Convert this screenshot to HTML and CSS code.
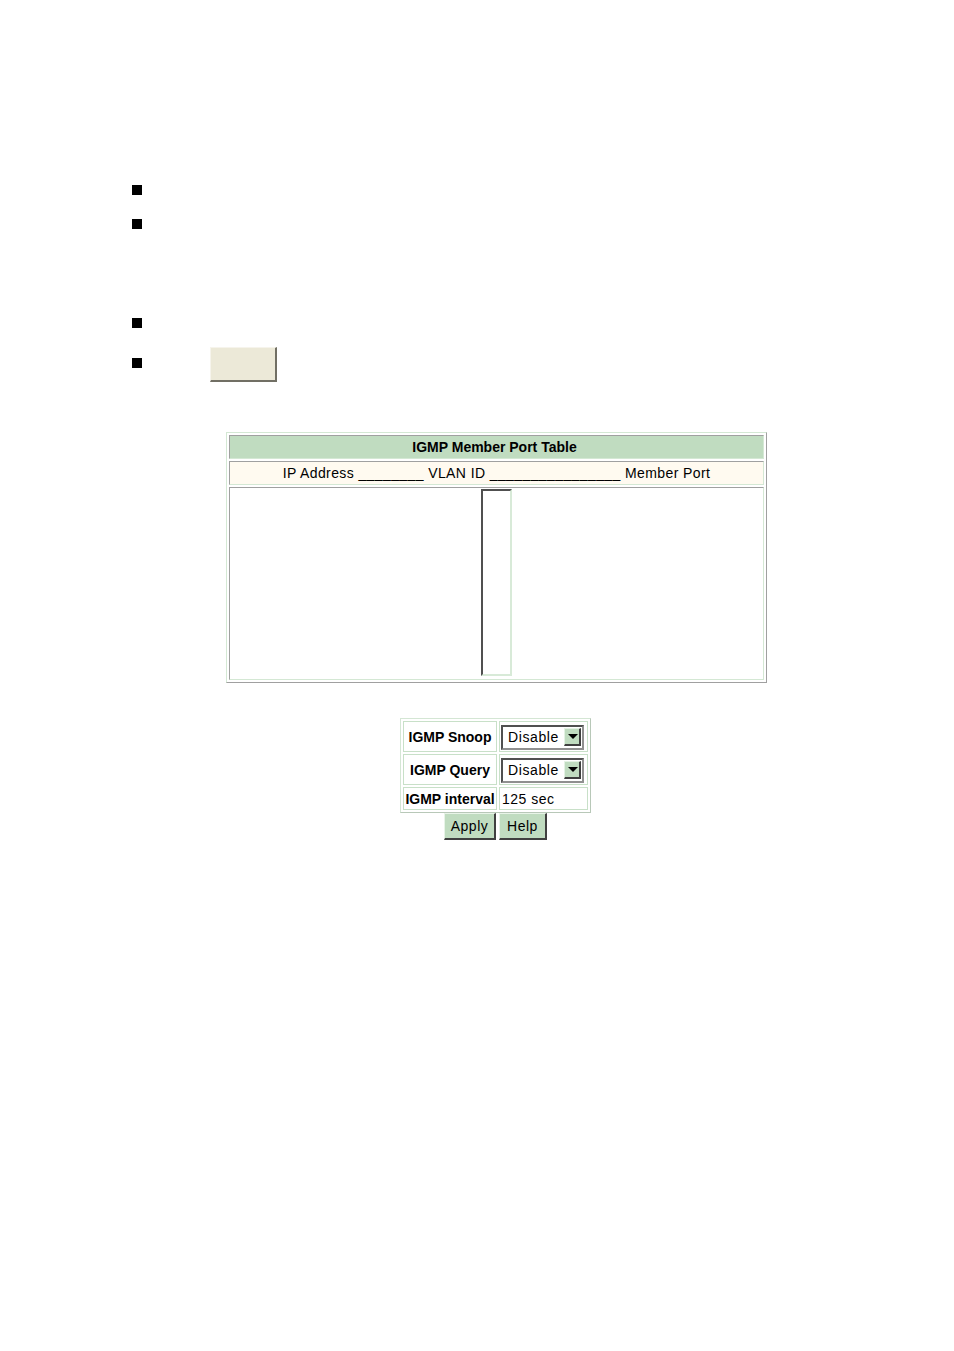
FILE: index.html
```html
<!DOCTYPE html>
<html>
<head>
<meta charset="utf-8">
<link rel="stylesheet" href="styles.css">
</head>
<body>
<div class="page">
  <ul class="bullets">
    <li class="b1"><span class="sq"></span></li>
    <li class="b2"><span class="sq"></span></li>
    <li class="b3"><span class="sq"></span></li>
    <li class="b4"><span class="sq"></span><button class="grey-btn" type="button"></button></li>
  </ul>

  <table class="member">
    <tr><td class="head">IGMP Member Port Table</td></tr>
    <tr><td class="cols">IP Address ________ VLAN ID ________________ Member Port</td></tr>
    <tr><td class="body"><div class="listbox"></div></td></tr>
  </table>

  <div class="form">
    <table class="igmp">
      <tr>
        <td class="label">IGMP Snoop</td>
        <td class="value"><div class="select"><span class="opt">Disable</span><span class="arrow"></span></div></td>
      </tr>
      <tr>
        <td class="label">IGMP Query</td>
        <td class="value"><div class="select"><span class="opt">Disable</span><span class="arrow"></span></div></td>
      </tr>
      <tr class="short">
        <td class="label">IGMP interval</td>
        <td class="value text">125 sec</td>
      </tr>
    </table>
    <div class="actions">
      <button class="btn apply" type="button">Apply</button>
      <button class="btn help" type="button">Help</button>
    </div>
  </div>
</div>
</body>
</html>
```
FILE: styles.css
```css
html, body {
  margin: 0;
  padding: 0;
  background: #ffffff;
}
body {
  font-family: "Liberation Sans", Arial, sans-serif;
  font-size: 14px;
  color: #000;
}
.page {
  width: 954px;
  min-height: 1351px;
  padding-top: 185px;
  box-sizing: border-box;
}
.bullets {
  list-style: none;
  margin: 0 0 0 132px;
  padding: 0;
}
.bullets li {
  display: flex;
  align-items: flex-start;
}
.sq {
  display: block;
  width: 10px;
  height: 10px;
  background: #000;
}
.b1 { margin-bottom: 24px; }
.b2 { margin-bottom: 89px; }
.b3 { margin-bottom: 19px; }
.b4 .sq { margin-top: 11px; }
.grey-btn {
  margin: 0 0 0 68px;
  padding: 0;
  width: 67px;
  height: 35px;
  box-sizing: border-box;
  background: #ece9d8;
  border-style: solid;
  border-width: 1px 2px 2px 1px;
  border-color: #f6f4ec #716f64 #716f64 #f6f4ec;
}

/* member table */
.member {
  margin: 50px 0 0 226px;
  width: 541px;
  box-sizing: border-box;
  border-collapse: separate;
  border-spacing: 2px;
  border-style: solid;
  border-width: 1px;
  border-color: #d4e8d4 #a0a0a0 #a0a0a0 #d4e8d4;
}
.member td {
  padding: 0;
  border-style: solid;
  border-width: 1px;
  border-color: #a0a0a0 #d4e8d4 #d4e8d4 #a0a0a0;
  text-align: center;
  box-sizing: border-box;
}
.member .head {
  height: 24px;
  background: #c0dcc0;
  font-weight: bold;
  padding-right: 4px;
}
.member .cols {
  height: 24px;
  background: #fffaf0;
  letter-spacing: 0.4px;
}
.member .body {
  height: 193px;
  background: #fff;
  vertical-align: top;
}
.listbox {
  width: 31px;
  height: 187px;
  margin: 1px auto 0;
  box-sizing: border-box;
  background: #fff;
  border-style: solid;
  border-width: 2px;
  border-color: #505050 #d8ead8 #d8ead8 #505050;
}

/* igmp form */
.form {
  margin: 35px 0 0 400px;
  width: 191px;
}
.igmp {
  width: 191px;
  box-sizing: border-box;
  border-collapse: separate;
  border-spacing: 2px;
  border-style: solid;
  border-width: 1px;
  border-color: #d4e6d4 #b8c8b8 #b8c8b8 #d4e6d4;
}
.igmp td {
  padding: 0;
  height: 31px;
  box-sizing: border-box;
  border: 1px solid #c8e0c8;
}
.igmp .short td {
  height: 23px;
}
.igmp .label {
  width: 94px;
  font-weight: bold;
  text-align: center;
  white-space: nowrap;
}
.igmp .value {
  width: 89px;
  padding-left: 1px;
}
.igmp .value.text {
  padding-left: 2px;
  letter-spacing: 0.5px;
}
.select {
  display: flex;
  align-items: center;
  justify-content: space-between;
  width: 83px;
  height: 25px;
  margin-top: 1px;
  box-sizing: border-box;
  border-style: solid;
  border-width: 2px;
  border-color: #505050 #909090 #909090 #505050;
  padding: 0 1px 0 5px;
  background: #fff;
  letter-spacing: 0.6px;
}
.arrow {
  position: relative;
  display: block;
  width: 17px;
  height: 18px;
  box-sizing: border-box;
  background: #c0dcc0;
  border-style: solid;
  border-width: 1px 2px 2px 1px;
  border-color: #e4f2e4 #404040 #404040 #e4f2e4;
}
.arrow::after {
  content: "";
  position: absolute;
  left: 3px;
  top: 5px;
  border-style: solid;
  border-width: 5px 5px 0 5px;
  border-color: #000 transparent transparent transparent;
}
.actions {
  display: flex;
  justify-content: center;
  gap: 3px;
}
.btn {
  margin: 0;
  padding: 0;
  height: 27px;
  box-sizing: border-box;
  background: #c0dcc0;
  font-family: "Liberation Sans", Arial, sans-serif;
  font-size: 14px;
  letter-spacing: 0.5px;
  color: #000;
  border-style: solid;
  border-width: 1px 2px 2px 1px;
  border-color: #e8f4e8 #404040 #404040 #e8f4e8;
}
.apply { width: 52px; }
.help { width: 48px; }
```
